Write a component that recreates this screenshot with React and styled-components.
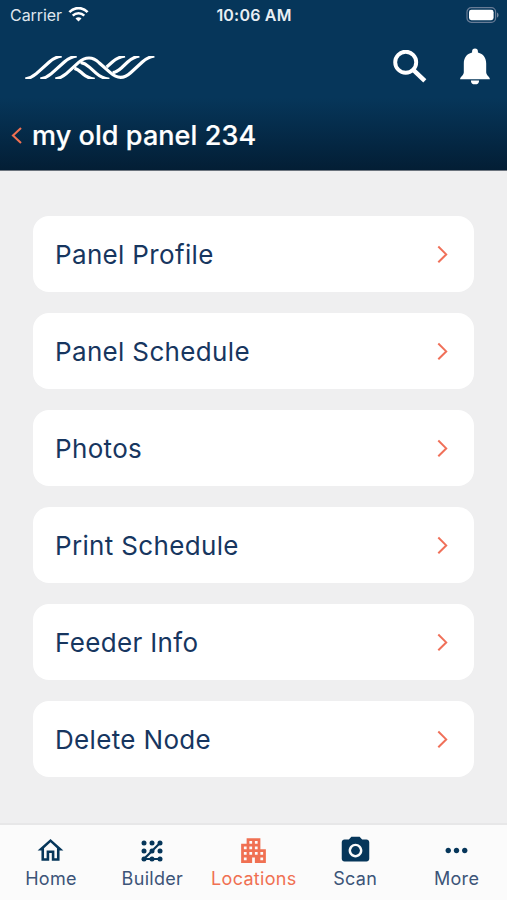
import React from "react";
import styled, { createGlobalStyle } from "styled-components";
import {
  MdOutlineHome,
  MdApartment,
  MdPhotoCamera,
  MdMoreHoriz,
} from "react-icons/md";

const NAVY = "#06365a";
const CORAL = "#f07052";

const GlobalStyle = createGlobalStyle`
  * { box-sizing: border-box; }
  body { margin: 0; }
`;

const Screen = styled.div`
  display: flex;
  flex-direction: column;
  width: 507px;
  height: 900px;
  overflow: hidden;
  background: #efeff0;
  font-family: Inter, "Liberation Sans", sans-serif;
`;

const Header = styled.header`
  height: 171px;
  flex: none;
  display: flex;
  flex-direction: column;
  color: #fff;
  background: linear-gradient(#06365a 0, #06365a 98px, #031e35 170px);
  border-bottom: 1px solid #6c747e;
`;

const StatusBar = styled.div`
  height: 29px;
  display: grid;
  grid-template-columns: 1fr auto 1fr;
  align-items: center;
  padding: 0 8px 0 10px;
  font-size: 16px;
`;

const Carrier = styled.div`
  display: flex;
  align-items: center;
  gap: 6px;
  color: #dfe6ee;
  letter-spacing: -0.05px;
`;

const Clock = styled.div`
  font-weight: 600;
  color: #e9eef3;
  letter-spacing: 0.2px;
  padding-right: 1px;
`;

const BatterySlot = styled.div`
  display: flex;
  justify-content: flex-end;
`;

const Toolbar = styled.div`
  height: 75px;
  display: flex;
  align-items: center;
  justify-content: space-between;
  padding: 0 16px 0 25px;
  svg { display: block; }
`;

const LogoMark = styled.svg`
  margin-top: 2px;
`;

const Actions = styled.div`
  display: flex;
  align-items: center;
  gap: 32px;
`;

const TitleRow = styled.div`
  display: flex;
  align-items: center;
  gap: 10px;
  height: 63px;
  padding-left: 11px;
`;

const Title = styled.h1`
  margin: 0;
  font-size: 27px;
  line-height: 32px;
  font-weight: 500;
  letter-spacing: 0.08px;
  white-space: nowrap;
  -webkit-text-stroke: 0.2px #fff;
`;

const List = styled.main`
  flex: 1;
  display: flex;
  flex-direction: column;
  gap: 21px;
  padding: 45.400px 33px 0;
`;

const Row = styled.div`
  height: 76px;
  display: flex;
  flex: none;
  align-items: center;
  justify-content: space-between;
  padding: 0 26px 0 22px;
  border-radius: 16px;
  background: #fff;
  color: #17365f;
  font-size: 26px;
  letter-spacing: 0.340px;
`;

const TabBar = styled.nav`
  height: 77px;
  flex: none;
  display: grid;
  grid-template-columns: repeat(5, 1fr);
  background: #fbfbfb;
  border-top: 2px solid #e7e7e8;
`;

const Tab = styled.div`
  display: flex;
  flex-direction: column;
  align-items: center;
  padding: 8px 0 0 0.600px;
  color: ${(p) => (p.$active ? CORAL : NAVY)};
`;

const TabIcon = styled.div`
  height: 35px;
  display: flex;
  align-items: center;
  svg { display: block; }
`;

const TabLabel = styled.span`
  font-size: 18px;
  line-height: 22px;
  letter-spacing: 0.300px;
  color: ${(p) => (p.$active ? CORAL : "#3c5478")};
`;

const Wifi = () => (
  <svg width="21" height="15" viewBox="0 0 21 15" fill="none" stroke="#fff">
    <path d="M1.400 5.100C6.600-.2 14.400-.2 19.600 5.100" strokeWidth="2.700" />
    <path d="M4.700 8.600c3.300-3.300 8.300-3.300 11.600 0" strokeWidth="2.500" />
    <path d="M10.500 14.600 7.500 11.500c1.700-1.600 4.300-1.600 6 0Z" fill="#fff" stroke="none" />
  </svg>
);

const Battery = () => (
  <svg width="33" height="16" viewBox="0 0 33 16">
    <rect x="1" y=".7" width="28.600" height="14.600" rx="4.300" fill="none" stroke="#687c96" strokeWidth="1.200" />
    <rect x="3" y="2.800" width="24.600" height="10.400" rx="2.400" fill="#fff" />
    <path d="M31 5.400c2 1 2 4.200 0 5.200Z" fill="#75889f" />
  </svg>
);

const Logo = () => (
  <LogoMark width="131" height="23" viewBox="75 166 393 69" fill="none" stroke="#fff" strokeWidth="9.500">
    <path d="M76 235C92 232 99 228 109 219L148 184C158 175 167 169 185 166" />
    <path d="M121 235C137 232 144 228 154 219L193 184C203 175 212 169 230 166" />
    <path d="M166 235C182 232 189 228 199 219L236 185C247 175 255 172 267 172 280 172 288 177 298 187L331 216C342 226 350 230 362 230 374 230 381 226 391 217L427 184C437 175 446 169 463 166" />
    <path d="M223 203C234 205 240 212 249 220 259 229 268 233 284 236" />
    <path d="M242 185C252 187 260 192 269 200L289 218C300 228 310 233 328 236" />
    <path d="M320 199 337 184C347 175 356 169 375 166" />
    <path d="M338 216C349 215 355 210 364 202L383 184C393 175 401 169 418 166" />
  </LogoMark>
);

const SearchIcon = () => (
  <svg width="34" height="34" viewBox="0 0 34 34" fill="none" stroke="#fff">
    <circle cx="12.700" cy="12.200" r="10.500" strokeWidth="3.900" />
    <path d="m20 19.700 11.800 11.200" strokeWidth="4.500" />
  </svg>
);

const BellIcon = () => (
  <svg width="32" height="37" viewBox="0 0 32 38" fill="#fff">
    <path d="M16 .5a3 3 0 0 0-3 3v1.100C7.300 6 4.500 10.200 4.500 16v9c0 3-3.800 4.800-3.800 7h30.600c0-2.200-3.800-4-3.800-7v-9C27.500 10.200 24.700 6 19 4.600V3.500a3 3 0 0 0-3-3Z" />
    <path d="M11.800 33.300h8.400a4.200 4 0 0 1-8.400 0Z" />
  </svg>
);

const BackIcon = () => (
  <svg width="11" height="17" viewBox="0 0 11 17" fill="none" stroke={CORAL} strokeWidth="2.100">
    <path d="M10 1 2 8.500l8 7.500" />
  </svg>
);

const ForwardIcon = () => (
  <svg width="11" height="18" viewBox="0 0 11 18" fill="none" stroke="#f07059" strokeWidth="2">
    <path d="m1.300 1.500 7.900 7.900-7.900 7.900" />
  </svg>
);

const dotPositions = [3, 11, 19];

const PatternIcon = () => (
  <svg width="22" height="22" viewBox="0 0 22 22" fill="currentColor">
    {dotPositions.map((y) =>
      dotPositions.map((x) => <circle key={`${x}-${y}`} cx={x} cy={y} r="2.500" />)
    )}
    <path d="M19 3 3 19h16" fill="none" stroke="currentColor" strokeWidth="2.200" />
  </svg>
);

const rows = ["Panel Profile", "Panel Schedule", "Photos", "Print Schedule", "Feeder Info", "Delete Node"];

const tabs = [
  { label: "Home", Icon: MdOutlineHome, size: 31 },
  { label: "Builder", Icon: PatternIcon },
  { label: "Locations", Icon: MdApartment, size: 33, active: true },
  { label: "Scan", Icon: MdPhotoCamera, size: 33 },
  { label: "More", Icon: MdMoreHoriz, size: 33 },
];

export default function App() {
  return (
    <Screen>
      <GlobalStyle />
      <Header>
        <StatusBar>
          <Carrier>Carrier <Wifi /></Carrier>
          <Clock>10:06 AM</Clock>
          <BatterySlot><Battery /></BatterySlot>
        </StatusBar>
        <Toolbar>
          <Logo />
          <Actions><SearchIcon /><BellIcon /></Actions>
        </Toolbar>
        <TitleRow>
          <BackIcon />
          <Title>my old panel 234</Title>
        </TitleRow>
      </Header>
      <List>
        {rows.map((label) => (
          <Row key={label}><span>{label}</span><ForwardIcon /></Row>
        ))}
      </List>
      <TabBar>
        {tabs.map(({ label, Icon, size, active }) => (
          <Tab key={label} $active={active}>
            <TabIcon><Icon size={size} /></TabIcon>
            <TabLabel $active={active}>{label}</TabLabel>
          </Tab>
        ))}
      </TabBar>
    </Screen>
  );
}
